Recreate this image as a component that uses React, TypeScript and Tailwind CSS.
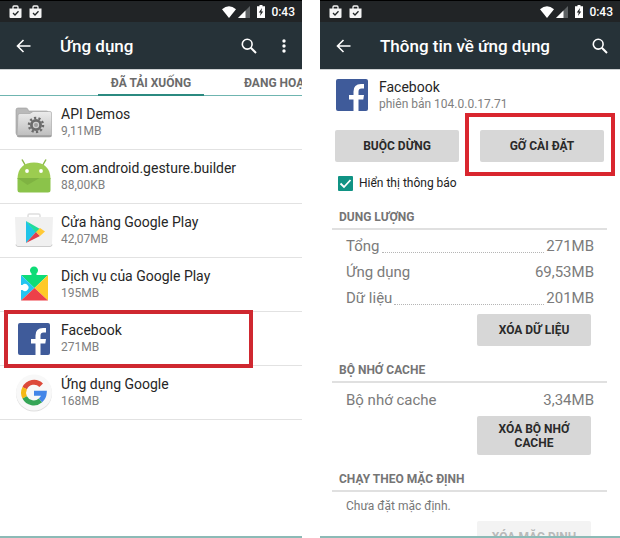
import type { ReactNode } from "react";

const font = "font-[Roboto,'Noto_Sans',sans-serif]";

function BagIcon() {
  return (
    <svg className="h-[14px] w-[13px]" viewBox="0 0 13 14" aria-hidden="true">
      <path d="M4 4V2Q4 1 5 1h3q1 0 1 1v2" fill="none" stroke="#f5f5f5" strokeWidth="1.3" />
      <path d="M.5 3.5h12V12q0 1-1 1h-10q-1 0-1-1z" fill="#f5f5f5" />
      <path d="m4 8 2 2 3.5-3.7" fill="none" stroke="#212628" strokeWidth="1.3" />
    </svg>
  );
}

function StatusBar() {
  return (
    <div className="flex h-[22px] items-center border-t border-black bg-[#212426] pr-[7px] pl-[9px] text-white">
      <div className="flex gap-[7px]">
        <BagIcon />
        <BagIcon />
      </div>
      <div className="ml-auto flex items-center">
        <svg className="h-[12px] w-[14px]" viewBox="0 0 14 12" aria-hidden="true">
          <path d="M0 3.2Q7-2.8 14 3.2L7 12z" fill="#fff" />
        </svg>
        <svg className="ml-[2px] h-[12px] w-[12px]" viewBox="0 0 12 12" aria-hidden="true">
          <path d="M12 0v12H0z" fill="#5d6163" />
          <path d="M7.5 4.5V12H0z" fill="#fff" />
        </svg>
        <svg className="ml-[7px] h-[13px] w-[8px]" viewBox="0 0 8 13" aria-hidden="true">
          <path d="M2.5 0h3v1.3H8V13H0V1.3h2.5z" fill="#fff" />
          <path d="M5 3 1.8 7.4h1.9L3 11l3.2-4.6H4.4z" fill="#212426" />
        </svg>
        <span className="ml-[6px] text-[12px] leading-4 font-medium">0:43</span>
      </div>
    </div>
  );
}

function Header({ title, menu }: { title: string; menu?: boolean }) {
  return (
    <header className="flex h-[47px] items-center bg-[#263238] px-4 text-white">
      <button aria-label="Quay lại">
        <svg className="h-[14px] w-[15px]" viewBox="0 0 15 14" aria-hidden="true">
          <path d="M14.500 7H2M7.5 1 1.5 7l6 6" fill="none" stroke="#fff" strokeWidth="1.6" />
        </svg>
      </button>
      <h1 className="ml-[29px] text-[17px] leading-6 font-medium whitespace-nowrap">{title}</h1>
      <button aria-label="Tìm kiếm" className={menu ? "mr-[25px] ml-auto" : "-mr-[4px] ml-auto"}>
        <svg className="h-[16px] w-[16px]" viewBox="0 0 16 16" aria-hidden="true">
          <circle cx="6.2" cy="6.2" r="4.9" fill="none" stroke="#fff" strokeWidth="1.6" />
          <path d="m9.8 9.8 5.2 5.2" stroke="#fff" strokeWidth="2" />
        </svg>
      </button>
      {menu && (
        <button aria-label="Thêm">
          <svg className="h-[14px] w-[4px]" viewBox="0 0 4 14" aria-hidden="true">
            <circle cx="2" cy="2" r="1.7" fill="#fff" />
            <circle cx="2" cy="7" r="1.7" fill="#fff" />
            <circle cx="2" cy="12" r="1.7" fill="#fff" />
          </svg>
        </button>
      )}
    </header>
  );
}

function FolderIcon() {
  return (
    <svg className="size-[38px]" viewBox="0 0 38 38" aria-hidden="true">
      <defs>
        <linearGradient id="folder" x1="0" y1="0" x2="0" y2="1">
          <stop offset="0" stopColor="#ececec" />
          <stop offset="1" stopColor="#bcbcbc" />
        </linearGradient>
      </defs>
      <path d="M1 6q0-2 2-2h8q1.500 0 2 1.500l.5 1.500h18q2 0 2 2v22H3q-2 0-2-2z" fill="#b9b9b9" stroke="#999" strokeWidth=".6" />
      <path d="M2 31 3 11q.2-1.500 2-1.500h10l3-2h17q1.500 0 1.500 1.500v22q0 2-2 2H4q-2 0-2-2z" fill="url(#folder)" stroke="#a0a0a0" strokeWidth=".6" />
      <path d="M2.500 32h34" stroke="#8b8b8b" strokeWidth="1" />
      <circle cx="21" cy="21" r="7" fill="none" stroke="#6b6b6b" strokeWidth="2.500" strokeDasharray="2.200 2.198" />
      <circle cx="21" cy="21" r="4.600" fill="#d0d0d0" stroke="#6b6b6b" strokeWidth="2.800" />
      <circle cx="21" cy="21" r="2" fill="#a0a0a0" />
    </svg>
  );
}

function AndroidIcon() {
  return (
    <svg className="size-[38px]" viewBox="0 0 38 38" aria-hidden="true">
      <path d="m7 1.500 4 7M31 1.500l-4 7" stroke="#8bb84a" strokeWidth="1.500" />
      <path d="M2.500 21C2.500 10 9 4.500 19 4.500S35.500 10 35.500 21z" fill="#9ccc50" />
      <path d="M2.500 20h33v12q0 2.500-2.500 2.500H5q-2.500 0-2.500-2.500z" fill="#8bc34a" />
      <path d="m2.500 20 10 7 12-7z" fill="#7fb342" />
      <circle cx="12" cy="13" r="1.900" fill="#fff" />
      <circle cx="26" cy="13" r="1.900" fill="#fff" />
    </svg>
  );
}

function PlayStoreIcon() {
  return (
    <svg className="size-[38px]" viewBox="0 0 38 38" aria-hidden="true">
      <path d="M13 5V3.500Q13 2 14.500 2h9Q25 2 25 3.500V5" fill="none" stroke="#dedede" strokeWidth="1.500" />
      <path d="M0 5h38l-1 27q0 2-2 2H3q-2 0-2-2z" fill="#f0f0f0" />
      <path d="M1 32.500q0 2 2 2h32q2 0 2-2" fill="none" stroke="#ccc" />
      <path d="M11 9v22l10-11z" fill="#20c4e8" />
      <path d="m11 9 14 8-4 4z" fill="#20dc9b" />
      <path d="m11 31 14-7-4-4z" fill="#df3f4e" />
      <path d="m25 16 5 3.500-5 4.500-4-4z" fill="#ffc936" />
    </svg>
  );
}

function PlayServicesIcon() {
  return (
    <svg className="size-[38px]" viewBox="0 0 38 38" aria-hidden="true">
      <path d="M6 9h10.500v-1.500a4 4 0 1 1 5 0V9H33L19.500 22z" fill="#0edc77" />
      <path d="M6 9v10h1.500a3.500 3.500 0 1 1 0 5H6v10.500L19.500 22z" fill="#24c5f0" />
      <path d="M33 9v25.500L19.500 22z" fill="#ffc928" />
      <path d="M6 34.500h27L19.500 22z" fill="#ed4049" />
    </svg>
  );
}

function FacebookIcon({ className }: { className: string }) {
  return (
    <svg className={className} viewBox="0 0 32 32" aria-hidden="true">
      <rect width="32" height="32" rx="2" fill="#3f5b9a" />
      <path d="M17.500 32V20.500H13V16h4.500v-3.500q0-7.500 7.500-7.500h3v4.500h-2.500q-3 0-3 3V16H28l-.7 4.500h-4.800V32z" fill="#fff" />
    </svg>
  );
}

function GoogleIcon() {
  return (
    <svg className="size-[38px]" viewBox="0 0 38 38" aria-hidden="true">
      <circle cx="19" cy="19.500" r="18" fill="#dedede" />
      <circle cx="19" cy="18.500" r="18" fill="#f8f8f8" />
      <g fill="none" strokeWidth="5">
        <path d="M9.700 14.200a10.200 10.200 0 0 1 16.500-3" stroke="#dc493a" />
        <path d="M9.700 14.200a10.200 10.200 0 0 0 0 9.200" stroke="#f5b916" />
        <path d="M9.700 23.400a10.200 10.200 0 0 0 15.800 3" stroke="#35a556" />
        <path d="M25.500 26.400a10.200 10.200 0 0 0 3.700-7.200H19" stroke="#4285e8" />
      </g>
    </svg>
  );
}

const apps: { name: string; size: string; icon: ReactNode; marked?: boolean }[] = [
  { name: "API Demos", size: "9,11MB", icon: <FolderIcon /> },
  { name: "com.android.gesture.builder", size: "88,00KB", icon: <AndroidIcon /> },
  { name: "Cửa hàng Google Play", size: "42,07MB", icon: <PlayStoreIcon /> },
  { name: "Dịch vụ của Google Play", size: "195MB", icon: <PlayServicesIcon /> },
  { name: "Facebook", size: "271MB", icon: <FacebookIcon className="size-8" />, marked: true },
  { name: "Ứng dụng Google", size: "168MB", icon: <GoogleIcon /> },
];

function AppList() {
  return (
    <section className="min-w-0 overflow-hidden border-b-2 border-[#8cbab6]">
      <StatusBar />
      <Header title="Ứng dụng" menu />
      <nav className="flex h-[27px] border-t border-b border-t-[#cfd2d3] border-b-[#6fb5b0] pl-[98px] text-[12px] leading-[26px] font-bold whitespace-nowrap text-[#6b6b6b]">
        <button className="h-[26px] w-[106px] shrink-0 border-b-2 border-[#2b8a80]">ĐÃ TẢI XUỐNG</button>
        <button className="ml-[40px] h-[26px] shrink-0">ĐANG HOẠT ĐỘNG</button>
      </nav>
      <ul>
        {apps.map((app) => (
          <li key={app.name} className="relative flex h-[54px] items-center border-b border-[#e2e2e2] pl-[15px]">
            <span className="flex w-[38px] shrink-0 justify-center">{app.icon}</span>
            <div className="ml-2 pb-[2px] whitespace-nowrap">
              <p className="text-[14px] leading-[18px] text-[#262626]">{app.name}</p>
              <p className="text-[12px] leading-4 text-[#808080]">{app.size}</p>
            </div>
            {app.marked && <span className="absolute -top-[2px] -bottom-[3px] left-1 w-[249px] border-4 border-[#cf2830]" />}
          </li>
        ))}
      </ul>
    </section>
  );
}

function SectionTitle({ children }: { children: ReactNode }) {
  return (
    <h2 className="mr-[13px] ml-3 border-b-2 border-[#e0e0e0] pb-[3px] pl-[7px] text-[12px] leading-4 font-bold text-[#757575]">
      {children}
    </h2>
  );
}

function SizeRow({ label, value, dotted }: { label: string; value: string; dotted?: boolean }) {
  return (
    <div className="flex h-[26px] items-center pr-[26px] pl-[26px] text-[15px] leading-5 text-[#7b7b7b]">
      <dt>{label}</dt>
      <span className={dotted ? "mx-[2px] mt-3 flex-1 border-b border-dotted border-[#b5b5b5]" : "flex-1"} />
      <dd>{value}</dd>
    </div>
  );
}

const actionButton = "w-[114px] rounded-[2px] bg-[#d7d7d7] text-[12px] leading-[14px] font-bold text-[#2a2a2a]";

function AppInfo() {
  return (
    <section className="min-w-0 overflow-hidden border-b-2 border-[#8cbab6]">
      <StatusBar />
      <Header title="Thông tin về ứng dụng" />
      <div className="flex h-[52px] items-center border-t border-[#cfd2d3] pb-[1px] pl-4">
        <FacebookIcon className="size-8" />
        <div className="ml-[11px]">
          <p className="text-[14px] leading-[18px] text-[#262626]">Facebook</p>
          <p className="text-[12px] leading-4 text-[#808080]">phiên bản 104.0.0.17.71</p>
        </div>
      </div>
      <div className="mt-[9px] flex gap-[21px] pr-4 pl-[15px] text-[12px] font-bold text-[#2a2a2a]">
        <button className="h-8 flex-1 rounded-[2px] bg-[#d7d7d7]">BUỘC DỪNG</button>
        <div className="relative flex flex-1">
          <button className="h-8 flex-1 rounded-[2px] bg-[#d7d7d7]">GỠ CÀI ĐẶT</button>
          <span className="pointer-events-none absolute -top-[17px] -right-[11px] -bottom-[14px] -left-[15px] border-4 border-[#d9262e]" />
        </div>
      </div>
      <label className="mt-[13px] ml-[18px] flex w-fit items-center gap-[6px] text-[12px] leading-4 text-[#222]">
        <span className="relative flex size-[15px]">
          <input type="checkbox" defaultChecked className="peer size-[15px] appearance-none rounded-[1px] border-2 border-[#777] checked:border-[#109384] checked:bg-[#109384]" />
          <svg className="pointer-events-none absolute inset-0 hidden size-[15px] peer-checked:block" viewBox="0 0 15 15" aria-hidden="true">
            <path d="m2.500 7.500 3.500 3.500 6.500-7" fill="none" stroke="#fff" strokeWidth="1.800" />
          </svg>
        </span>
        Hiển thị thông báo
      </label>

      <div className="mt-[18px]">
        <SectionTitle>DUNG LƯỢNG</SectionTitle>
        <dl className="pt-[3px]">
          <SizeRow label="Tổng" value="271MB" dotted />
          <SizeRow label="Ứng dụng" value="69,53MB" />
          <SizeRow label="Dữ liệu" value="201MB" dotted />
        </dl>
        <div className="flex justify-end pt-[3px] pr-[29px]">
          <button className={actionButton + " h-8"}>XÓA DỮ LIỆU</button>
        </div>
      </div>

      <div className="mt-4">
        <SectionTitle>BỘ NHỚ CACHE</SectionTitle>
        <dl className="pt-1">
          <SizeRow label="Bộ nhớ cache" value="3,34MB" />
        </dl>
        <div className="flex justify-end pt-[3px] pr-[29px]">
          <button className={actionButton + " h-[39px] px-4"}>XÓA BỘ NHỚ CACHE</button>
        </div>
      </div>

      <div className="mt-4">
        <SectionTitle>CHẠY THEO MẶC ĐỊNH</SectionTitle>
        <p className="pt-[6px] pl-[26px] text-[12px] leading-4 text-[#777]">Chưa đặt mặc định.</p>
        <div className="flex h-[22px] justify-end overflow-hidden pt-[7px] pr-[29px]">
          <button disabled className="h-8 w-[114px] shrink-0 rounded-[2px] bg-[#f3f3f3] text-[12px] leading-[14px] font-bold text-[#b9b9b9]">
            XÓA MẶC ĐỊNH
          </button>
        </div>
      </div>
    </section>
  );
}

export default function App() {
  return (
    <main className={font + " grid min-h-screen grid-cols-[302fr_300fr] gap-[18px] bg-white"}>
      <AppList />
      <AppInfo />
    </main>
  );
}
